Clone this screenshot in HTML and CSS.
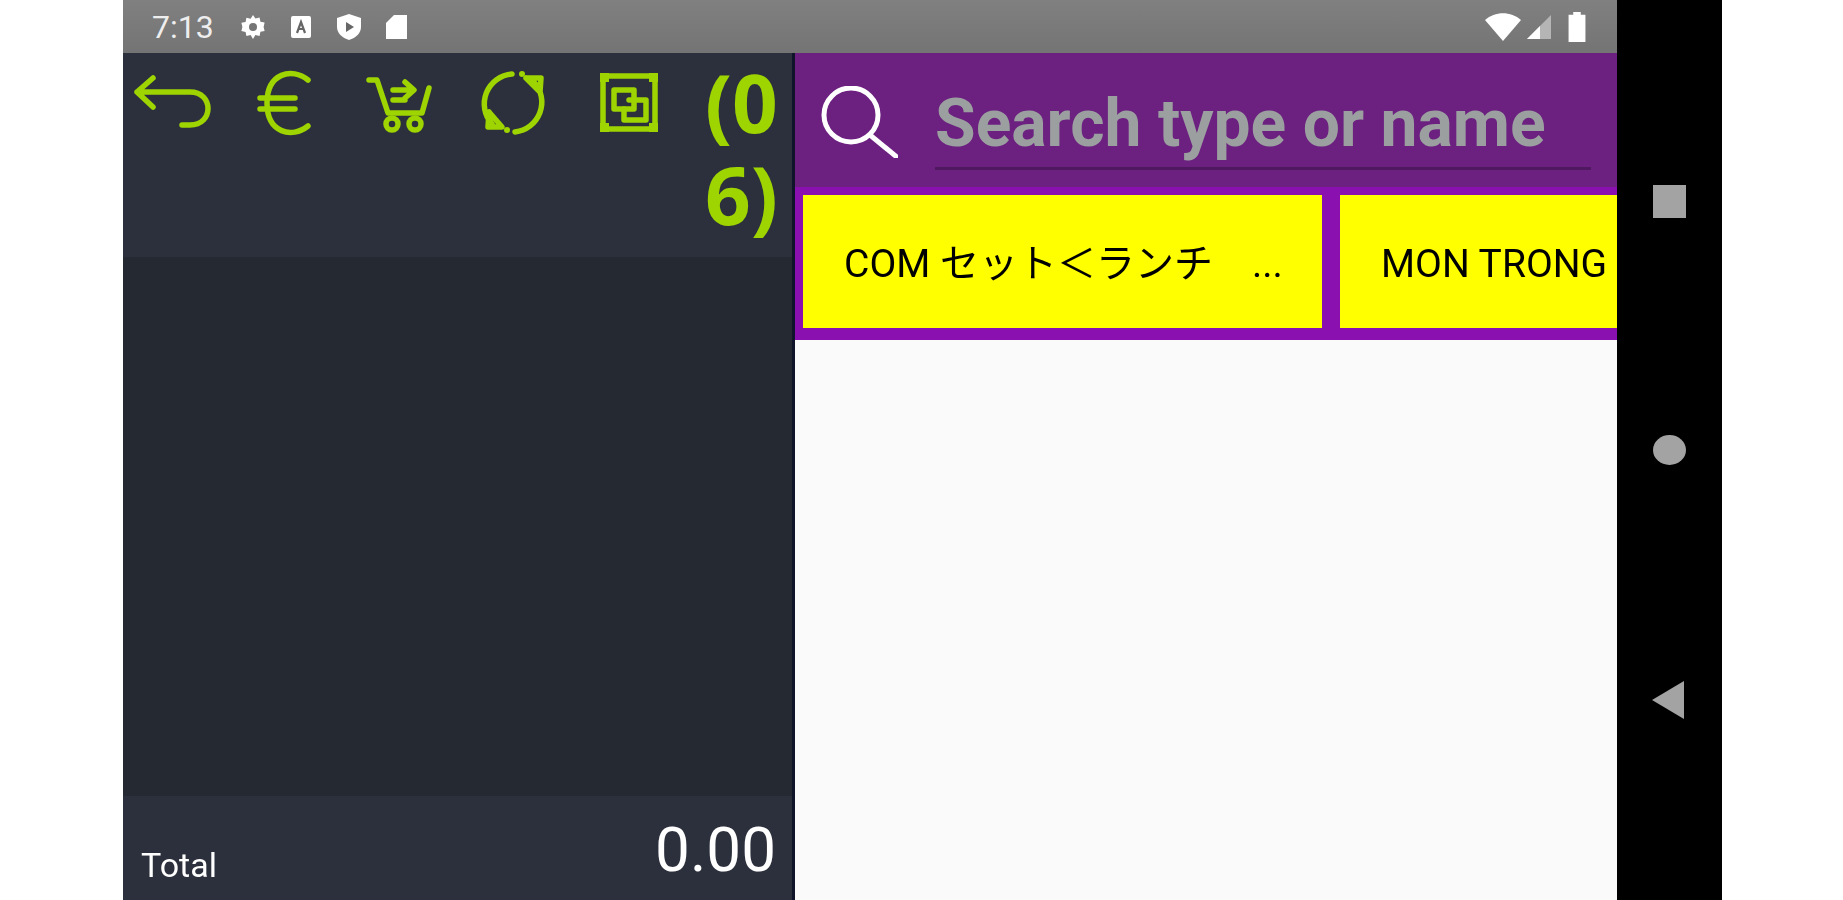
FILE: index.html
```html
<!DOCTYPE html>
<html lang="en">
  <head>
    <meta charset="UTF-8" />
    <meta name="viewport" content="width=device-width, initial-scale=1.0" />
    <title>Order</title>
    <link rel="stylesheet" href="styles.css">
  </head>
  <body>
    <div class="device">
      <div class="screen">
        <div class="status-bar">
          <div class="status-left">
            <span class="clock">7:13</span>
            <svg class="status-icon" viewBox="0 0 28 28">
              <path d="M14 2l2.4 3.6 4.2-1 .8 4.2 4.2.8-1 4.4 1 4-4.2.8-.8 4.2-4.2-1L14 26l-2.400-3.900-4.200 1-.8-4.200-4.200-.8 1-4-1-4.400 4.200-.8.8-4.200 4.200 1z" fill="#fff"/>
              <circle cx="14" cy="14" r="4" fill="#757575"/>
            </svg>
            <svg class="status-icon" viewBox="0 0 28 28">
              <rect x="4" y="3" width="20" height="22" rx="2" fill="#fff"/>
              <path d="M10 20l4-11 4 11M11.500 16h5" fill="none" stroke="#666" stroke-width="2.200"/>
            </svg>
            <svg class="status-icon" viewBox="0 0 28 28">
              <path d="M14 1l12 4v9c0 6-5 11-12 13C7 25 2 20 2 14V5z" fill="#fff"/>
              <path d="M11 9l8 5-8 5z" fill="#666"/>
            </svg>
            <svg class="status-icon" viewBox="0 0 28 28">
              <path d="M11 2h13v24H3V10z" fill="#fff"/>
            </svg>
          </div>
          <div class="status-right">
            <svg class="wifi" viewBox="0 0 36 28"><path d="M0 7C10-2 26-2 36 7L18 28z" fill="#fff"/></svg>
            <svg class="signal" viewBox="0 0 28 28">
              <path d="M26 2v24H2z" fill="#b5b5b5"/>
              <path d="M15 13v13H2z" fill="#fff"/>
            </svg>
            <svg class="battery" viewBox="0 0 20 32"><path d="M6 0h8v3h5v29H1V3h5z" fill="#fff"/></svg>
          </div>
        </div>

        <div class="app">
          <div class="left-panel">
            <div class="toolbar">
              <svg viewBox="0 0 100 66" class="tool-icon">
                <path d="M30 8L14 22l16 15M14 22h53C91 22 91 55 67 55h-8" />
              </svg>
              <svg viewBox="0 0 100 66" class="tool-icon">
                <path d="M71 10C55-3 30 3 30 33C30 63 55 69 71 56M23 28h35M23 39h35" />
              </svg>
              <svg viewBox="0 0 100 66" class="tool-icon">
                <path d="M18 10h8L37 43H71L78 18" />
                <path d="M42 20h20M54 12l9 8-9 8M42 30h12" />
                <circle cx="41" cy="54" r="6" />
                <circle cx="64" cy="54" r="6" />
              </svg>
              <svg viewBox="0 0 100 66" class="tool-icon">
                <path d="M47 4A30 30 0 0 0 27 54M24 42l-1 15h14l-13-15" />
                <path d="M50 62A30 30 0 0 0 69 12M61 8h15l-1 14-14-14" />
                <circle class="dot" cx="57" cy="4" r="3" />
                <circle class="dot" cx="42" cy="60" r="3" />
              </svg>
              <svg viewBox="0 0 100 66" class="tool-icon">
                <rect x="24" y="6" width="52" height="53" />
                <rect class="dot" x="21" y="3" width="9" height="9" />
                <rect class="dot" x="70" y="3" width="9" height="9" />
                <rect class="dot" x="21" y="53" width="9" height="9" />
                <rect class="dot" x="70" y="53" width="9" height="9" />
                <rect x="35" y="20" width="20" height="19" />
                <path d="M50 30h17v20H45V39" />
              </svg>
              <div class="count">(0 6)</div>
            </div>
            <div class="order-list"></div>
            <div class="total-bar">
              <span class="total-label">Total</span>
              <span class="total-value">0.00</span>
            </div>
          </div>

          <div class="right-panel">
            <div class="search-bar">
              <svg viewBox="0 0 78 72" class="search-icon">
                <circle cx="31" cy="29" r="27" fill="none" stroke="#fff" stroke-width="5"/>
                <path d="M50 49l28 23" stroke="#fff" stroke-width="5"/>
              </svg>
              <div class="search-input">Search type or name</div>
            </div>
            <div class="category-strip">
              <div class="category first">COM セット＜ランチ　...</div>
              <div class="category second">MON TRONG</div>
            </div>
            <div class="items"></div>
          </div>
        </div>
      </div>

      <div class="nav-bar">
        <div class="nav-square"></div>
        <div class="nav-circle"></div>
        <svg viewBox="0 0 32 38" class="nav-back"><path d="M32 0v38L0 19z" fill="#a3a3a3"/></svg>
      </div>
    </div>
  </body>
</html>
```

FILE: styles.css
```css
body {
  margin: 0;
  height: 900px;
  overflow: hidden;
  background-color: #fff;
  font-family: "Roboto", "Noto Sans CJK JP", sans-serif;
}
.device {
  display: flex;
  height: 900px;
  width: 1599px;
  margin-left: 123px;
  filter: blur(0.6px);
}
.screen {
  flex: 1;
  display: flex;
  flex-direction: column;
  min-width: 0;
}

/* status bar */
.status-bar {
  height: 53px;
  flex-shrink: 0;
  background: linear-gradient(#808080, #747474);
  display: flex;
  justify-content: space-between;
  align-items: center;
  padding: 0 30px 0 29px;
}
.status-left {
  display: flex;
  align-items: center;
  gap: 20px;
}
.status-right {
  display: flex;
  align-items: center;
  gap: 4px;
}
.clock {
  color: #eee;
  font-size: 32px;
  width: 62px;
  margin-right: 5px;
}
.status-icon {
  width: 28px;
  height: 28px;
}
.wifi {
  width: 36px;
  height: 28px;
}
.signal {
  width: 28px;
  height: 28px;
}
.battery {
  width: 20px;
  height: 30px;
  margin-left: 10px;
}

/* main area */
.app {
  flex: 1;
  display: flex;
  min-height: 0;
}
.left-panel {
  width: 669px;
  display: flex;
  flex-direction: column;
  border-right: 3px solid #10142a;
}
.toolbar {
  height: 204px;
  flex-shrink: 0;
  background-color: #2c303c;
  display: flex;
  gap: 14px;
  align-items: flex-start;
}
.tool-icon {
  width: 100px;
  height: 66px;
  flex-shrink: 0;
  margin-top: 17px;
  fill: none;
  stroke: #9ed400;
  stroke-width: 5.5;
  stroke-linecap: round;
  stroke-linejoin: round;
}
.tool-icon .dot {
  fill: #9ed400;
  stroke: none;
}
.count {
  width: 78px;
  margin-left: 12px;
  padding-top: 3px;
  color: #9ed400;
  font-family: "Open Sans", sans-serif;
  font-weight: 700;
  font-size: 80px;
  line-height: 92px;
}
.order-list {
  flex: 1;
  background-color: #252932;
}
.total-bar {
  height: 104px;
  box-sizing: border-box;
  flex-shrink: 0;
  background-color: #2c303c;
  display: flex;
  justify-content: space-between;
  align-items: flex-end;
  padding: 0 16px 15px 18px;
}
.total-label {
  color: #fff;
  font-size: 34px;
}
.total-value {
  color: #fff;
  font-size: 62px;
  line-height: 70px;
}

/* right side */
.right-panel {
  flex: 1;
  display: flex;
  flex-direction: column;
  min-width: 0;
}
.search-bar {
  height: 134px;
  flex-shrink: 0;
  box-sizing: border-box;
  background-color: #6c2080;
  display: flex;
  align-items: flex-start;
  padding: 33px 26px 0 25px;
  gap: 37px;
}
.search-icon {
  width: 78px;
  height: 72px;
  flex-shrink: 0;
}
.search-input {
  flex: 1;
  height: 79px;
  color: #9b9f9f;
  font-weight: 700;
  font-size: 66px;
  line-height: 72px;
  margin-top: 2px;
  border-bottom: 3px solid #511862;
  white-space: nowrap;
}
.category-strip {
  height: 153px;
  flex-shrink: 0;
  box-sizing: border-box;
  background-color: #8a10b0;
  display: flex;
  gap: 18px;
  padding: 8px 0 12px 8px;
  overflow: hidden;
}
.category {
  height: 133px;
  background-color: #ffff00;
  color: #000;
  font-size: 39px;
  line-height: 40px;
  display: flex;
  align-items: center;
  padding: 4px 0 0 41px;
  box-sizing: border-box;
  flex-shrink: 0;
  white-space: nowrap;
}
.category.first {
  width: 519px;
}
.category.second {
  width: 400px;
}
.items {
  flex: 1;
  background-color: #fafafa;
}

/* android nav */
.nav-bar {
  width: 105px;
  flex-shrink: 0;
  background-color: #000;
  display: flex;
  flex-direction: column;
  align-items: center;
  padding-top: 185px;
  box-sizing: border-box;
}
.nav-square {
  width: 33px;
  height: 33px;
  background-color: #a3a3a3;
}
.nav-circle {
  width: 33px;
  height: 30px;
  border-radius: 50%;
  background-color: #a3a3a3;
  margin-top: 217px;
}
.nav-back {
  width: 32px;
  height: 38px;
  margin-top: 216px;
  margin-right: 3px;
}
```
